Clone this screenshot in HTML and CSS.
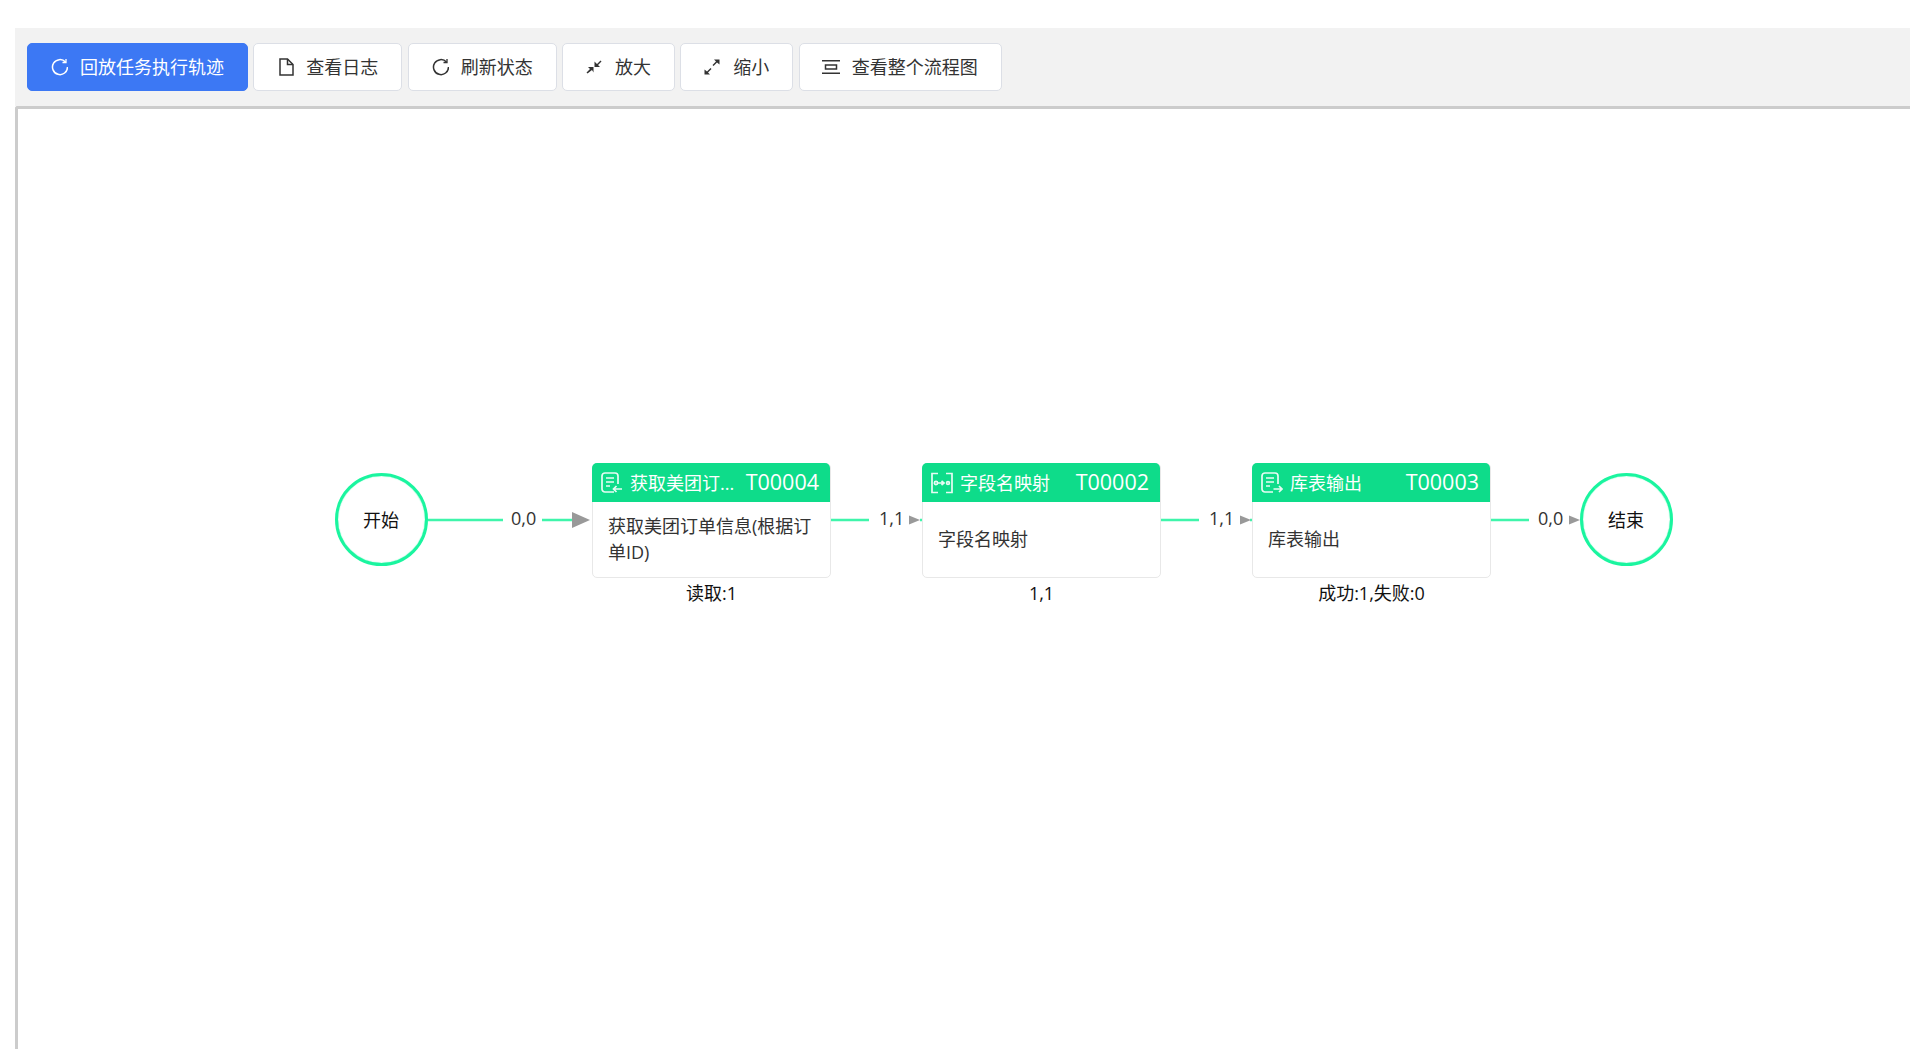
FILE: index.html
```html
<!DOCTYPE html>
<html lang="zh-CN">
<head>
<meta charset="utf-8">
<title>流程图</title>
<link rel="stylesheet" href="styles.css">
</head>
<body>
<div class="page">
  <div class="toolbar">
    <button class="btn btn-primary"><svg class="ico" viewBox="0 0 18 18"><path d="M15.500 4A7.500 7.500 0 1 0 17.500 9"/><path d="M16 1v3.500h-3.500" class="tip"/></svg>回放任务执行轨迹</button>
    <button class="btn"><svg class="ico" viewBox="0 0 18 18"><path d="M4 1h7.500L17 6.500V17H4z"/><path d="M11.500 1v5.500H17"/></svg>查看日志</button>
    <button class="btn"><svg class="ico" viewBox="0 0 18 18"><path d="M15.500 4A7.500 7.500 0 1 0 17.500 9"/><path d="M16 1v3.500h-3.500" class="tip"/></svg>刷新状态</button>
    <button class="btn"><svg class="ico" viewBox="0 0 18 18"><path class="solid" d="M9.500 3.500V9H15l-2-2 3.500-3.500-1-1L12 6zM8.500 14.500V9H3l2 2-3.500 3.500 1 1L7 12z"/></svg>放大</button>
    <button class="btn"><svg class="ico" viewBox="0 0 18 18"><path class="solid" d="M16.500 1.500H11l2 2-3.500 3.500 1 1L14 4.500l2.500 2zM1.500 16.500H7l-2-2 3.500-3.500-1-1L4 13.500l-2.500-2z"/></svg>缩小</button>
    <button class="btn"><svg class="ico" viewBox="0 0 18 18"><path d="M0 2.700h18M0 15.300h18M3.500 7h11v4h-11z"/></svg>查看整个流程图</button>
  </div>
  <div class="canvas">
    <svg class="edges" width="1892" height="940" viewBox="0 0 1892 940">
      <g class="edge-line">
        <path d="M410 411h75M524 411h30"/>
        <path d="M813 411h38M902 411h4"/>
        <path d="M1143 411h38M1232 411h4"/>
        <path d="M1473 411h38"/>
      </g>
      <g class="edge-arrow">
        <path d="M554 403l18 8-18 8z"/>
        <path d="M891 406.500l11 4.500-11 4.500z"/>
        <path d="M1222 406.500l11 4.500-11 4.500z"/>
        <path d="M1551 406.500l11 4.500-11 4.500z"/>
      </g>
    </svg>

    <div class="circle circle-start">开始</div>
    <div class="circle circle-end">结束</div>

    <span class="edge-label el1">0,0</span>
    <span class="edge-label el2">1,1</span>
    <span class="edge-label el3">1,1</span>
    <span class="edge-label el4">0,0</span>

    <div class="node n1">
      <div class="node-head">
        <svg class="node-ico" viewBox="0 0 22 22"><path d="M13 20H4a3 3 0 0 1-3-3V4a3 3 0 0 1 3-3h10a3 3 0 0 1 3 3v8M5 6h8M5 10h8M5 14h4M21 17h-8.500M15.500 14l-3 3 3 3"/></svg>
        <span class="node-title">获取美团订...</span>
        <span class="node-code">T00004</span>
      </div>
      <div class="node-body">获取美团订单信息(根据订单ID)</div>
      <div class="node-status">读取:1</div>
    </div>

    <div class="node n2">
      <div class="node-head">
        <svg class="node-ico" viewBox="0 0 22 22"><path d="M7 1.500H1v19h6M15 1.500h6v19h-6M7 11h5.500M10.500 9l2.500 2-2.500 2"/><circle cx="5" cy="11" r="1.600"/><circle cx="17" cy="11" r="1.400"/></svg>
        <span class="node-title">字段名映射</span>
        <span class="node-code">T00002</span>
      </div>
      <div class="node-body">字段名映射</div>
      <div class="node-status">1,1</div>
    </div>

    <div class="node n3">
      <div class="node-head">
        <svg class="node-ico" viewBox="0 0 22 22"><path d="M12 20H4a3 3 0 0 1-3-3V4a3 3 0 0 1 3-3h10a3 3 0 0 1 3 3v8M5 6h8M5 10h8M5 14h4M12.500 17H21M18 14l3 3-3 3"/></svg>
        <span class="node-title">库表输出</span>
        <span class="node-code">T00003</span>
      </div>
      <div class="node-body">库表输出</div>
      <div class="node-status">成功:1,失败:0</div>
    </div>
  </div>
</div>
</body>
</html>
```
FILE: styles.css
```css
* { box-sizing: border-box; }
html, body { margin: 0; height: 100%; overflow: hidden; background: #fff; }
body {
  font-family: "Open Sans", "Noto Sans CJK SC", sans-serif;
  font-size: 18px;
  color: #333;
}
.page {
  height: 100%;
  padding: 28px 0 0 15px;
  display: flex;
  flex-direction: column;
}
.toolbar {
  display: flex;
  align-items: center;
  gap: 5.33px;
  height: 78px;
  padding-left: 12px;
  background: #f2f2f2;
  flex: none;
}
.btn {
  display: flex;
  align-items: center;
  height: 48px;
  padding: 0 23px 2px 22px;
  background: #fff;
  border: 1px solid #dcdfe6;
  border-radius: 5px;
  font: inherit;
  color: #333;
  white-space: nowrap;
}
.btn-primary {
  background: #3c78f4;
  border-color: #3c78f4;
  color: #fff;
}
.ico {
  width: 18px;
  height: 18px;
  margin: 2px 12px 0 0;
  fill: none;
  stroke: #333;
  stroke-width: 1.5;
}
.btn-primary .ico { stroke: #fff; }
.ico .tip { stroke-width: 1.3; }
.ico .solid { fill: #333; stroke: none; }
.canvas {
  position: relative;
  flex: 1;
  background: #fff;
  border: 3px solid #ccc;
  border-right: 0;
  border-bottom: 0;
  border-top-left-radius: 3px;
}
.edges { position: absolute; left: 0; top: 0; }
.edge-line path { fill: none; stroke: #3ff5ab; stroke-width: 2.4; }
.edge-arrow path { fill: #999; }
.circle {
  position: absolute;
  top: 364px;
  width: 93px;
  height: 93px;
  padding: 0 1px 1px 0;
  border: 3px solid #1af59f;
  border-radius: 50%;
  background: #fff;
  box-shadow: inset 0 0 1px #1af59f;
  display: flex;
  align-items: center;
  justify-content: center;
  color: #111;
}
.circle-start { left: 317px; }
.circle-end { left: 1562px; }
.edge-label {
  position: absolute;
  top: 397px;
  line-height: 24px;
  color: #333;
}
.el1 { left: 493px; }
.el2 { left: 861px; }
.el3 { left: 1191px; }
.el4 { left: 1520px; }
.node {
  position: absolute;
  top: 354px;
  width: 239px;
  height: 115px;
  display: flex;
  flex-direction: column;
  background: #fff;
  border: 1px solid #e8e8e8;
  border-radius: 5px;
}
.n1 { left: 574px; }
.n2 { left: 904px; }
.n3 { left: 1234px; }
.node-head {
  display: flex;
  align-items: center;
  height: 39px;
  margin: -1px 0 0 -1px;
  padding: 0 11px 2px 9px;
  background: #0edc8a;
  border-radius: 5px 5px 0 0;
  color: #fff;
  flex: none;
}
.node-ico {
  width: 22px;
  height: 22px;
  margin: 2px 7px 0 0;
  flex: none;
  fill: none;
  stroke: #fff;
  stroke-width: 1.7;
  opacity: .9;
}
.node-title {
  flex: 1;
  min-width: 0;
  white-space: nowrap;
  margin-right: 6px;
}
.node-code { font-size: 21.500px; flex: none; }
.node-body {
  flex: 1;
  display: flex;
  align-items: center;
  padding: 0 15px 1px;
  line-height: 26px;
  color: #333;
}
.node-status {
  position: absolute;
  left: 0;
  right: 0;
  top: 117px;
  text-align: center;
  line-height: 24px;
  color: #111;
}
```
